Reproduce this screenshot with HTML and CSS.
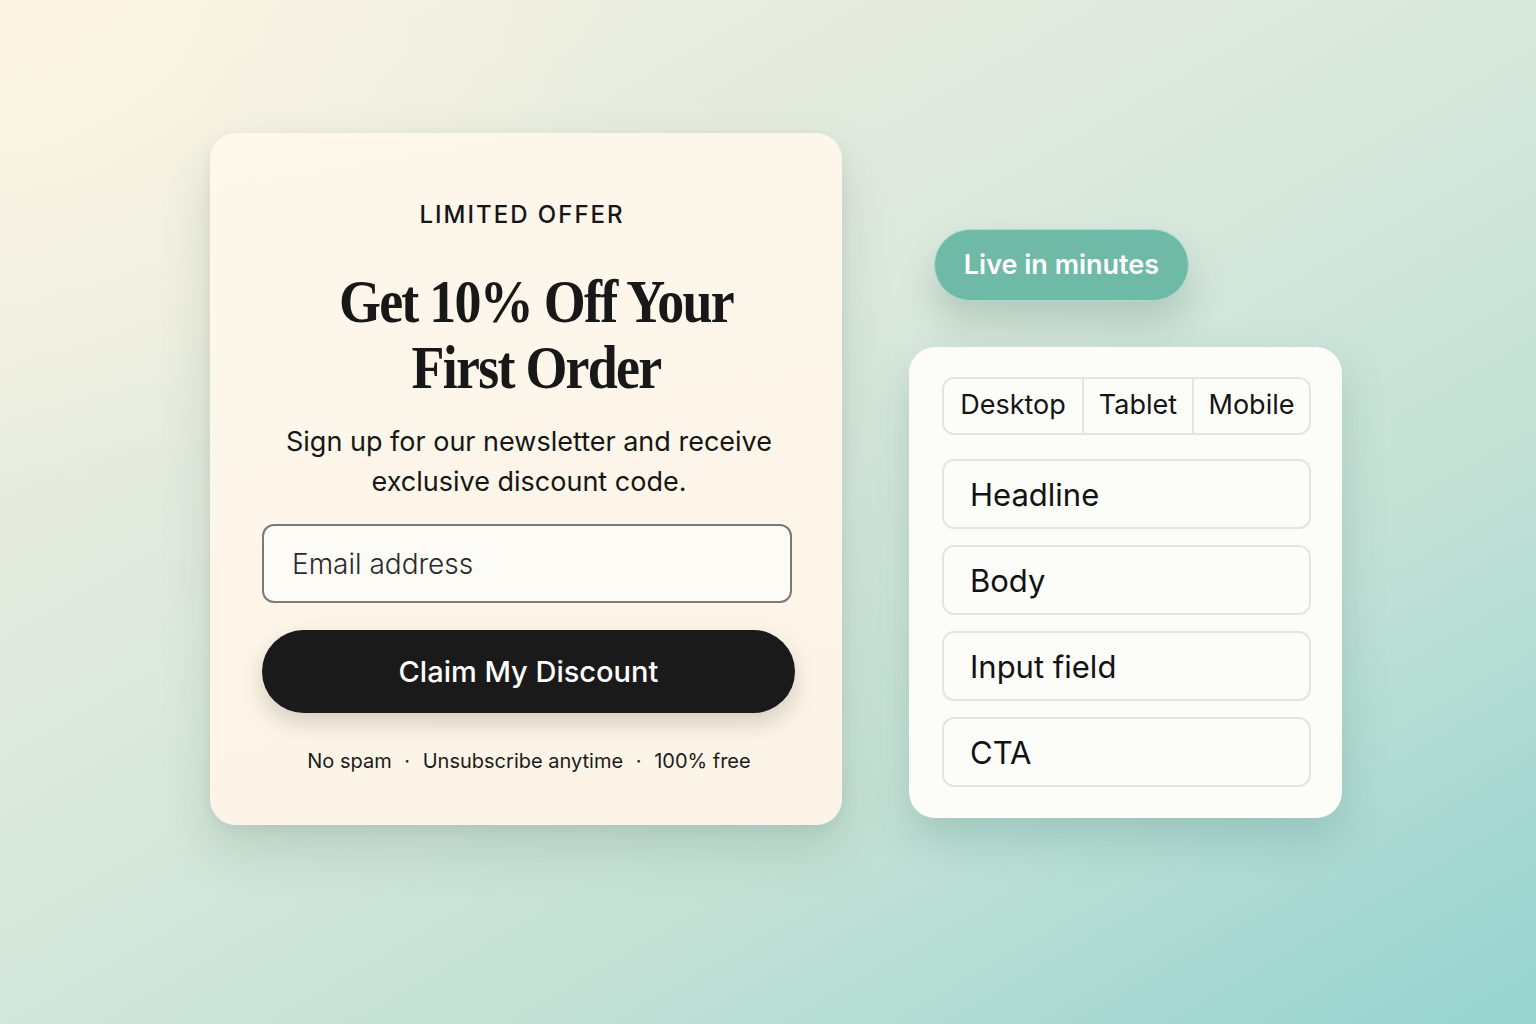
FILE: index.html
```html
<!DOCTYPE html>
<html lang="en">
<head>
  <meta charset="UTF-8" />
  <meta name="viewport" content="width=device-width, initial-scale=1.0"/>
  <title>Newsletter Popup Builder</title>
  <link rel="stylesheet" href="styles.css">
</head>
<body>

  <main class="stage">

    <!-- Popup preview -->
    <section class="offer-card">
      <p class="eyebrow">LIMITED OFFER</p>
      <h1>Get 10% Off Your<br>First Order</h1>
      <p class="lead">Sign up for our newsletter and receive exclusive discount code.</p>
      <form class="signup">
        <input type="email" placeholder="Email address">
        <button type="submit">Claim My Discount</button>
      </form>
      <p class="perks">No spam <span class="dot">&middot;</span> Unsubscribe anytime <span class="dot">&middot;</span> 100% free</p>
    </section>

    <!-- Editor side -->
    <aside class="side">
      <div class="live-pill">Live in minutes</div>

      <div class="editor">
        <div class="tabs">
          <span class="tab">Desktop</span>
          <span class="tab">Tablet</span>
          <span class="tab">Mobile</span>
        </div>
        <div class="block">Headline</div>
        <div class="block">Body</div>
        <div class="block">Input field</div>
        <div class="block">CTA</div>
      </div>
    </aside>

  </main>

</body>
</html>
```

FILE: styles.css
```css
html, body {
  margin: 0;
  padding: 0;
  height: 100%;
}

body {
  font-family: Inter, 'Noto Sans', sans-serif;
  color: #151515;
  overflow: hidden;
  background:
    radial-gradient(ellipse 900px 700px at 0% 0%, rgba(252, 245, 228, 0.95), rgba(252, 245, 228, 0) 70%),
    linear-gradient(150deg, #f6f1e2 0%, #dde9dd 40%, #c3e1d6 70%, #95d3cf 100%);
}

.stage {
  display: flex;
  align-items: flex-start;
  padding: 133px 0 0 210px;
}

/* ---------- offer card ---------- */

.offer-card {
  box-sizing: border-box;
  width: 632px;
  height: 692px;
  padding: 67px 47px 0 53px;
  border-radius: 26px;
  background: linear-gradient(170deg, #fdf7ec 0%, #fcf4e6 100%);
  box-shadow: 0 24px 50px rgba(70, 100, 85, 0.18), 0 4px 12px rgba(70, 100, 85, 0.08);
  text-align: center;
}

.eyebrow {
  margin: 0 0 0 -14px;
  font-size: 24px;
  line-height: 30px;
  font-weight: 500;
  letter-spacing: 2px;
  color: #161616;
}

.offer-card h1 {
  margin: 38px 0 0 14px;
  font-family: 'Liberation Serif', 'DejaVu Serif', serif;
  font-weight: 700;
  font-size: 62px;
  line-height: 66px;
  letter-spacing: -2px;
  color: #181818;
  transform: scaleX(0.87);
}

.lead {
  margin: 22px auto 0;
  max-width: 500px;
  font-size: 27px;
  line-height: 40px;
  color: #161616;
}

.signup {
  display: flex;
  flex-direction: column;
  margin-top: 22px;
}

.signup input {
  box-sizing: border-box;
  height: 79px;
  width: 530px;
  margin-left: -1px;
  padding: 0 28px;
  border: 2px solid #7a7a78;
  border-radius: 12px;
  background: #fdfbf6;
  font-family: inherit;
  font-size: 28px;
  font-weight: 300;
  color: #222;
}

.signup input::placeholder {
  color: #2a2a2a;
}

.signup button {
  height: 83px;
  width: 533px;
  margin: 27px 0 0 -1px;
  border: none;
  border-radius: 42px;
  background: #1a1a1a;
  color: #fff;
  font-family: inherit;
  font-size: 29px;
  font-weight: 500;
  box-shadow: 0 10px 22px rgba(40, 30, 10, 0.18);
  cursor: pointer;
}

.perks {
  margin: 34px 0 0;
  font-size: 20px;
  line-height: 28px;
  color: #1b1b1b;
}

.perks .dot {
  margin: 0 7px;
}

/* ---------- right side ---------- */

.side {
  display: flex;
  flex-direction: column;
  align-items: flex-start;
  margin: 96px 0 0 67px;
}

.live-pill {
  box-sizing: border-box;
  width: 255px;
  height: 72px;
  margin-left: 25px;
  border: 1.5px solid #a9dccd;
  border-radius: 36px;
  background: #6ebaa7;
  color: #fff;
  font-size: 27px;
  font-weight: 600;
  line-height: 69px;
  text-align: center;
  box-shadow: 0 22px 36px rgba(60, 100, 85, 0.22);
}

.editor {
  box-sizing: border-box;
  width: 433px;
  margin-top: 46px;
  padding: 30px 31px 31px 33px;
  border-radius: 26px;
  background: #fcfcf9;
  box-shadow: 0 20px 44px rgba(50, 110, 100, 0.22);
  display: flex;
  flex-direction: column;
  gap: 16px;
}

.tabs {
  display: flex;
  height: 58px;
  margin-bottom: 8px;
  border: 2px solid #e4e4e0;
  border-radius: 12px;
  box-sizing: border-box;
}

.tab {
  display: flex;
  align-items: center;
  justify-content: center;
  padding-bottom: 4px;
  font-size: 27px;
  color: #151515;
  border-left: 2px solid #e4e4e0;
}

.tab:first-child {
  border-left: none;
  width: 138px;
}

.tab:nth-child(2) {
  width: 108px;
}

.tab:last-child {
  flex: 1;
}

.block {
  box-sizing: border-box;
  height: 70px;
  padding-left: 26px;
  border: 2px solid #e4e4e0;
  border-radius: 12px;
  display: flex;
  align-items: center;
  font-size: 31px;
  color: #121212;
}
```
